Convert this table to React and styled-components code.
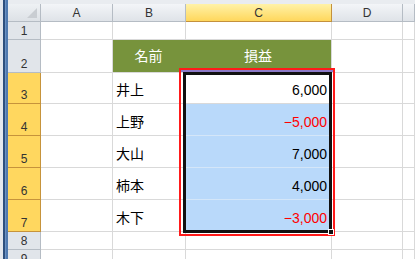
import styled, { createGlobalStyle, css } from "styled-components";

const GlobalStyle = createGlobalStyle`
  html, body {
    margin: 0;
    padding: 0;
    background: #ffffff;
    overflow: hidden;
  }
  body {
    font-family: "Liberation Sans", "Noto Sans CJK JP", sans-serif;
  }
`;

const COLS = ["A", "B", "C", "D", ""];
const COL_WIDTHS = [33, 72, 73, 146, 71];
const HEAD_HEIGHT = 18;
const ROW_HEIGHTS = [18, 33, 31, 32, 32, 32, 32, 18, 18];

const people = [
  { name: "井上", value: "6,000" },
  { name: "上野", value: "−5,000", loss: true },
  { name: "大山", value: "7,000" },
  { name: "柿本", value: "4,000" },
  { name: "木下", value: "−3,000", loss: true },
];

const sum = (arr) => arr.reduce((a, b) => a + b, 0);

// C3:C7 in sheet pixels
const range = {
  left: sum(COL_WIDTHS.slice(0, 3)),
  top: HEAD_HEIGHT + sum(ROW_HEIGHTS.slice(0, 2)),
  width: COL_WIDTHS[3],
  height: sum(ROW_HEIGHTS.slice(2, 7)),
};

const Window = styled.div`
  display: flex;
  width: 415px;
  height: 259px;
  overflow: hidden;
`;

const FrameEdge = styled.div`
  flex: 0 0 8px;
  background: linear-gradient(
    to right,
    #e4e8ee 0 3px,
    #2d4f7d 3px 5px,
    #6b91c3 5px 6px,
    #4f79af 6px
  );
`;

const Main = styled.div`
  flex: 1;
  display: flex;
  flex-direction: column;
`;

const TopStrip = styled.div`
  height: 4px;
  flex: 0 0 4px;
  background: #e9ecf0;
`;

const Sheet = styled.div`
  position: relative;
  display: grid;
  grid-template-columns: ${COL_WIDTHS.map((w) => `${w}px`).join(" ")} 1fr;
  grid-template-rows: ${HEAD_HEIGHT}px ${ROW_HEIGHTS.map((h) => `${h}px`).join(" ")};
`;

const headerBase = css`
  box-sizing: border-box;
  display: flex;
  justify-content: center;
  font-size: 12px;
  color: #333;
  border-right: 1px solid #b5bcc4;
  border-bottom: 1px solid #b5bcc4;
`;

const Corner = styled.div`
  ${headerBase};
  position: relative;
  background: linear-gradient(#eef1f4, #dde1e6);

  &::after {
    content: "";
    position: absolute;
    right: 3px;
    bottom: 3px;
    border-left: 10px solid transparent;
    border-bottom: 10px solid #c9cdd2;
  }
`;

const ColHead = styled.div`
  ${headerBase};
  align-items: center;
  background: ${({ $active }) =>
    $active
      ? "linear-gradient(#fff2a8, #ffd75c)"
      : "linear-gradient(#f3f5f8, #dfe3e8)"};
  border-bottom-color: ${({ $active }) => ($active ? "#c4913c" : "#b5bcc4")};
  border-right-color: ${({ $active }) => ($active ? "#c4913c" : "#b5bcc4")};
`;

const RowHead = styled.div`
  ${headerBase};
  align-items: flex-end;
  padding-bottom: 1px;
  background: ${({ $active }) => ($active ? "#ffd75f" : "#e1e5ea")};
  border-right-color: ${({ $active }) => ($active ? "#c6933b" : "#b5bcc4")};
  border-bottom-color: ${({ $active }) => ($active ? "#c6933b" : "#b5bcc4")};
`;

const toneStyles = {
  plain: css`
    background: #ffffff;
  `,
  title: css`
    background: #77933c;
    color: #ffffff;
    justify-content: center;
    padding-bottom: 8px;
  `,
  picked: css`
    background: #b9d9fa;
    border-bottom-color: #d4e6f8;
  `,
};

const Cell = styled.div`
  box-sizing: border-box;
  display: flex;
  align-items: flex-end;
  padding: 0 4px 5px 3px;
  font-size: 14px;
  line-height: 16px;
  white-space: nowrap;
  color: ${({ $loss }) => ($loss ? "#ff0000" : "#000")};
  justify-content: ${({ $align }) =>
    $align === "right" ? "flex-end" : "flex-start"};
  border-right: 1px solid #d9d9d9;
  border-bottom: 1px solid #d9d9d9;
  ${({ $tone }) => toneStyles[$tone || "plain"]};
  ${({ $joined }) =>
    $joined &&
    css`
      border-right-color: #77933c;
    `};
`;

// Selection frame over C3:C7 plus the red callout box around it
const SelectionArea = styled.div`
  position: absolute;
  pointer-events: none;
`;

const Callout = styled.div`
  position: absolute;
  left: -7px;
  top: -5px;
  right: -3px;
  bottom: -4px;
  border: 2px solid #ff1a1a;
`;

const HeaderRule = styled.div`
  position: absolute;
  left: -5px;
  right: -1px;
  top: -3px;
  height: 2px;
  background: #8c7ac8;
`;

const RangeBorder = styled.div`
  position: absolute;
  left: -3px;
  top: -1px;
  right: 0;
  bottom: -1px;
  border: 3px solid #111;
`;

const FillHandle = styled.div`
  position: absolute;
  right: -2px;
  bottom: -3px;
  width: 4px;
  height: 4px;
  background: #111;
  border: 1px solid #fff;
`;

function EmptyCells({ count = 5 }) {
  return Array.from({ length: count }, (_, i) => <Cell key={i} />);
}

export default function App() {
  return (
    <>
      <GlobalStyle />
      <Window>
        <FrameEdge />
        <Main>
          <TopStrip />
          <Sheet>
            <Corner />
            {COLS.map((c, i) => (
              <ColHead key={i} $active={c === "C"}>
                {c}
              </ColHead>
            ))}

            <RowHead>1</RowHead>
            <EmptyCells />

            <RowHead>2</RowHead>
            <Cell />
            <Cell $tone="title" $joined>
              名前
            </Cell>
            <Cell $tone="title">損益</Cell>
            <Cell />
            <Cell />

            {people.map((p, i) => [
              <RowHead key={`h${i}`} $active>
                {i + 3}
              </RowHead>,
              <Cell key={`a${i}`} />,
              <Cell key={`b${i}`}>{p.name}</Cell>,
              <Cell
                key={`c${i}`}
                $align="right"
                $loss={p.loss}
                $tone={i === 0 ? "plain" : "picked"}
              >
                {p.value}
              </Cell>,
              <EmptyCells key={`r${i}`} count={2} />,
            ])}

            {[8, 9].map((n) => [
              <RowHead key={`h${n}`}>{n}</RowHead>,
              <EmptyCells key={`r${n}`} />,
            ])}

            <SelectionArea
              style={{
                left: range.left,
                top: range.top,
                width: range.width,
                height: range.height,
              }}
            >
              <Callout />
              <HeaderRule />
              <RangeBorder />
              <FillHandle />
            </SelectionArea>
          </Sheet>
        </Main>
      </Window>
    </>
  );
}
